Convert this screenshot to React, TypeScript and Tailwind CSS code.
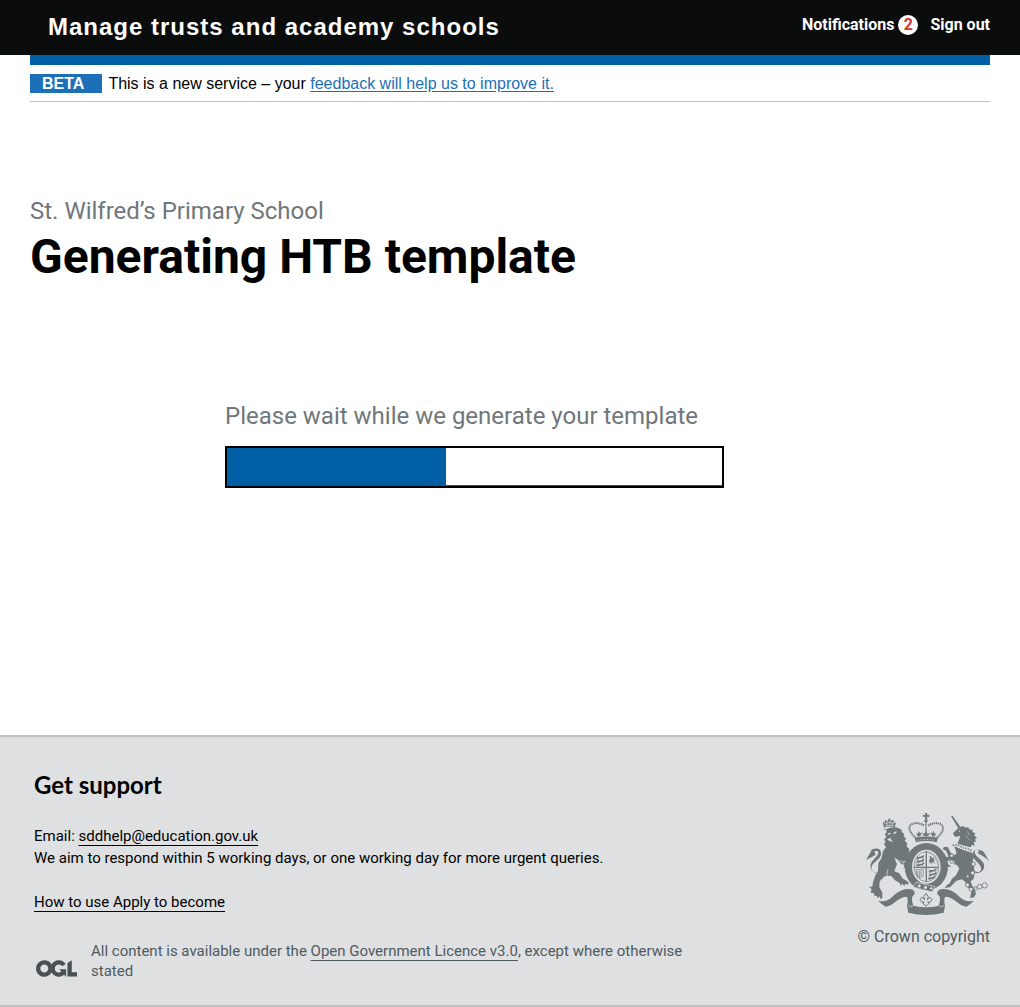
const progress = 44.2;

function OglLogo() {
  return (
    <svg viewBox="0 0 483.2 195.7" className="h-[17px] w-[41px] shrink-0" fill="#4a5152" role="img" aria-label="Open Government Licence">
      <path d="M421.5 142.8V.1l-50.7 32.3v161.1h112.4v-50.7zm-122.3-9.6A47.12 47.12 0 0 1 221 97.8c0-26 21.1-47.1 47.1-47.1 16.7 0 31.4 8.7 39.7 21.8l42.7-27.2A97.63 97.63 0 0 0 268.1 0c-36.5 0-68.3 20.1-85.1 49.7A98 98 0 0 0 97.8 0C43.9 0 0 43.9 0 97.8s43.9 97.8 97.8 97.8c36.5 0 68.3-20.1 85.1-49.7a97.76 97.76 0 0 0 149.6 25.4l19.4 22.2h3v-87.8h-80l24.3 27.5zM97.8 145c-26 0-47.1-21.1-47.1-47.1s21.1-47.1 47.1-47.1 47.1 21.1 47.1 47.1S123.8 145 97.8 145" />
    </svg>
  );
}

function Crest() {
  return (
    <svg viewBox="45 39 375 306" className="h-[102px] w-[125px]" fill="#6f777b" stroke="none" aria-hidden="true">
      {/* imperial crown */}
      <path d="M225 39h7l-1 6 7-1v7l-7-1 1 7h-7l1-7-7 1v-7l7 1z" />
      <circle cx="228" cy="62" r="5" />
      <g fill="none" stroke="#6f777b">
        <path d="M197 113C181 100 174 84 181 76c9-10 31-8 41 1M261 113c16-13 22-29 15-37-9-10-31-8-41 1" strokeWidth="6" strokeDasharray="4 2" />
        <path d="M228 66v34" strokeWidth="5" strokeDasharray="3.5 2" />
      </g>
      <path d="M194 114c22-6 47-6 70 0l-4 13c-20-5-42-5-62 0z" />
      <path d="M204 110l-6-11 6 2 2-9 4 8 6-3-5 12zM222 108l-7-9 9 2 4-11 4 11 9-2-7 9zM246 109l-5-12 6 3 4-8 2 9 6-2-6 11z" />
      <path d="M202 121q26-5 53 0" fill="none" stroke="#dee0e2" strokeWidth="2" strokeDasharray="5 4" />

      {/* garter and quartered shield */}
      <ellipse cx="229" cy="200" rx="65" ry="71" />
      <ellipse cx="229" cy="200" rx="43" ry="51" fill="#dee0e2" />
      <ellipse cx="229" cy="200" rx="37" ry="45" fill="none" stroke="#6f777b" strokeWidth="2" />
      <path d="M227 154h4v92h-4zM191 200h76v4h-76z" />
      <path d="M200 168l5 3 10-2 6-4 3 3-5 4 3 4-6-2-7 1-5 5-2-4-5 1 5-4zM198 179l7 3 10-2 6-4 3 3-5 4 3 4-6-2-7 1-5 5-2-4-7 1 6-4zM196 190l8 3 11-2 6-4 3 3-5 4 3 4-6-2-7 1-5 3-2-3-7 1 6-4z" />
      <path d="M235 208l7 3 10-2 6-4 3 3-5 4 3 4-6-2-7 1-5 4-2-3-5 1 5-4zM235 219l7 3 10-2 6-4 3 3-5 4 3 4-6-2-7 1-5 4-2-3-5 1 5-4zM235 230l6 3 7-2 6-4 3 3-5 4 1 4-5-2-5 1-5 3-2-3-3 1 3-4z" />
      <path d="M238 168l5 1 3 6 6-5-2 8 7 2-7 3 6 9-9-6-4 8-2-9-5 4 3-9-3-3 5 1z" />
      <path d="M236 160q20 3 27 34" fill="none" stroke="#6f777b" strokeWidth="2" strokeDasharray="3 2" />
      <path d="M198 209q14 1 22-3v22q-9 9-15 4-8-9-7-23zM203 212v18M208 212v20M213 210v20" fill="none" stroke="#6f777b" strokeWidth="2" />

      {/* lion */}
      <path d="M104 91c11-8 32-12 43-6l8 5 0 7 8 4-2 7 7 8-4 6 8 8-2 9 8 9-1 16-7 5 6 10 9 2 1 13-2 7-8-5-1 11-5-9-9 7 2-11-8-1-13-15-9-4 8 18-8 22 15 6 9 15 10 6 10 8-5 5-7-3-2 8-6-8-5 6-3-8-14-8-12-14-19 2-15 15-1 17 9 17 0 16-5 3-3-8-5 6-4-8-6 1-3-9-9 0 3-11-8-8 10 0 2-13 7-21 8-12 1-24 10-17 4-20 9-11-6-9 5-9-5-4 7-10-5-7 5-5 0-9-5-5z" />
      <path d="M112 101l8-3 3 4-9 2zM132 96l8-2-1 5-9 4zM112 116l13-1-2 4 7 7-8-2-9-4z" fill="#dee0e2" />
      <path d="M148 181q8 7 18 4M114 207q-4 12-2 25M153 197q7-5 11-15" stroke="#dee0e2" strokeWidth="2" fill="none" />
      <path d="M102 83l-4-17 6 3 1-9 7 4 6-10 6 8 7-3 1 9 6-1-4 16q-17-7-32 0z" />
      <path d="M103 72q14-9 30-2M106 79q13-6 26-1M111 64v13M120 61v14M128 65v12" stroke="#dee0e2" strokeWidth="2" fill="none" />
      <path d="M89 217C68 222 60 206 67 195c8-13 28-19 26-37-1-13-14-15-28-9l-4 9-13 21 18-8 11-7-4-10 8-2c12 7-5 20-14 31-11 14-5 33 12 36l9-1z" />

      {/* unicorn */}
      <path d="M303 49l5-1 24 34-7 3z" />
      <path d="M325 84L338 78 344 82 358 83 356 88 368 89 367 95 377 101 372 105 381 114 375 117 378 126 371 125 374 138 366 134 362 142 322 132 328 117 331 107 318 111 312 107 309 100 318 91z" />
      <path d="M325 93l6-3-3 6z" fill="#dee0e2" />
      <path d="M352 94q3 9 9 12M348 106q3 9 11 14" stroke="#dee0e2" strokeWidth="1.5" fill="none" />
      <path d="M312 138L340 150 366 158 371 170 368 184 372 200 374 218 371 236 362 244 366 256 374 268 378 282 372 292 360 294 362 284 364 274 354 262 346 246 336 238 318 243 306 256 300 262 284 264 290 256 299 250 306 236 318 226 328 206 322 196 312 192 314 184 306 180 292 182 294 192 304 200 294 200 284 186 284 172 296 170 288 152 278 148 282 140 294 142 302 158 314 166 320 158z" />
      <path d="M308 136q12-4 20 2 8 3 14 7 10 0 24 8" stroke="#dee0e2" strokeWidth="9" fill="none" />
      <path d="M308 136q12-4 20 2 8 3 14 7 10 0 24 8" stroke="#6f777b" strokeWidth="5" strokeDasharray="4 4" fill="none" />
      <path d="M374 218l9 2c19-4 24-21 16-33-8-12-26-20-25-31 1-6 8-7 13-4l-4 8 10 5 15 10 10 10-10-18-5-9c-9-10-28-12-34-1-7 14 10 25 20 38 8 10 5 20-5 22l-9-3z" />
      <g fill="#dee0e2" stroke="#6f777b" strokeWidth="2.5">
        <circle cx="370" cy="192" r="6" />
        <circle cx="368" cy="219" r="6" />
        <circle cx="352" cy="255" r="6" />
        <circle cx="363" cy="268" r="6" />
        <circle cx="377" cy="265" r="5" />
        <circle cx="389" cy="260" r="7" />
        <circle cx="404" cy="256" r="8" />
        <circle cx="353" cy="229" r="4" />
        <circle cx="305" cy="167" r="5" />
        <circle cx="305" cy="185" r="5" />
      </g>

      {/* garter buckle */}
      <path d="M198 247l57 13-9 16-56-15z" stroke="#dee0e2" strokeWidth="2" />
      <path d="M207 253l6 4-4 6-7-4zM225 257l7 4-4 7-7-4zM243 261l5 3-3 5-6-3z" fill="#dee0e2" />

      {/* motto ribbon */}
      <path d="M84 302Q108 308 126 292 144 272 166 268 190 264 194 277 195 284 188 288 183 300 190 317 228 326 266 317 273 300 268 288 261 284 262 277 266 264 290 268 312 272 330 292 348 308 372 302 362 312 349 320 332 318 318 304 302 290 286 290 280 296 285 318L281 338Q228 352 175 338L171 318Q176 296 170 290 154 290 138 304 124 318 107 320 94 312 84 302z" />
      <path d="M174 316q6 7 15 2M267 318q9 5 15-2" fill="none" stroke="#dee0e2" strokeWidth="2" />
      <path d="M228 280l7 10-3 9 9-7 5 7-6 8-7-1 5 4-10 8-10-8 5-4-7 1-6-8 5-7 9 7-3-9z" fill="none" stroke="#6f777b" strokeWidth="3" />
    </svg>
  );
}

export default function App() {
  return (
    <div className="flex min-h-screen flex-col bg-white font-['Roboto',sans-serif] text-black">
      <header className="bg-[#0b0c0c] text-white">
        <div className="flex h-[55px] items-center justify-between pr-[30px] pb-[2px] pl-12">
          <a href="#" className="font-['Liberation_Sans',sans-serif] text-2xl font-bold tracking-[1px]">
            Manage trusts and academy schools
          </a>
          <nav className="flex items-center gap-3 pb-1 text-base font-bold">
            <a href="#notifications" className="flex items-center gap-1">
              Notifications
              <span className="flex size-5 items-center justify-center rounded-full bg-white text-[#d4351c]">2</span>
            </a>
            <a href="#sign-out">Sign out</a>
          </nav>
        </div>
      </header>

      <div className="px-[30px]">
        <div className="h-[10px] bg-[#005ea5]" />
        <div className="flex h-[37px] items-center gap-[6px] border-b border-[#bfc1c3] font-['Liberation_Sans',sans-serif] text-base">
          <strong className="bg-[#1d70b8] pr-[18px] pl-3 leading-[19px] text-white">BETA</strong>
          <p className="pt-px">
            This is a new service – your{" "}
            <a href="#feedback" className="text-[#1d70b8] underline underline-offset-2">feedback will help us to improve it.</a>
          </p>
        </div>
      </div>

      <main className="grow px-[30px] pt-[94px]">
        <p className="text-2xl leading-[30px] text-[#6f777b]">St. Wilfred’s Primary School</p>
        <h1 className="pt-1 text-5xl leading-[54px] font-bold">Generating HTB template</h1>
        <section className="mt-[117px] ml-[195px] max-w-[499px]">
          <p id="progress-label" className="text-2xl leading-[30px] text-[#6f777b]">Please wait while we generate your template</p>
          <div
            role="progressbar"
            aria-labelledby="progress-label"
            aria-valuenow={progress}
            aria-valuemin={0}
            aria-valuemax={100}
            className="mt-[15px] border-2 border-black"
          >
            <div className="h-[38px] border-b border-[#005ea5]">
              <div className="h-full bg-[#005ea5]" style={{ width: `${progress}%` }} />
            </div>
          </div>
        </section>
      </main>

      <footer className="flex items-end justify-between border-y-2 border-[#bfc1c3] bg-[#dee0e2] pt-[33px] pr-[30px] pb-6 pl-[34px]">
        <div>
          <h2 className="font-['Lato',sans-serif] text-2xl leading-[30px] font-bold">Get support</h2>
          <p className="mt-[25px] text-[15px] leading-[22px]">
            Email: <a href="mailto:sddhelp@education.gov.uk" className="underline underline-offset-4">sddhelp@education.gov.uk</a>
            <br />
            We aim to respond within 5 working days, or one working day for more urgent queries.
          </p>
          <p className="mt-[22px] text-[15px] leading-[22px]">
            <a href="#guide" className="underline underline-offset-4">How to use Apply to become</a>
          </p>
          <div className="mt-7 flex items-end gap-[14px] pl-[2px]">
            <div className="pb-1"><OglLogo /></div>
            <p className="max-w-[625px] text-[15px] leading-5 text-[#505a5f]">
              All content is available under the{" "}
              <a href="#licence" className="underline underline-offset-4">Open Government Licence v3.0</a>, except where otherwise stated
            </p>
          </div>
        </div>
        <a href="#copyright" className="mb-[33px] flex shrink-0 flex-col items-end gap-[11px] text-base leading-[22px] text-[#505a5f]">
          <Crest />
          © Crown copyright
        </a>
      </footer>
    </div>
  );
}
